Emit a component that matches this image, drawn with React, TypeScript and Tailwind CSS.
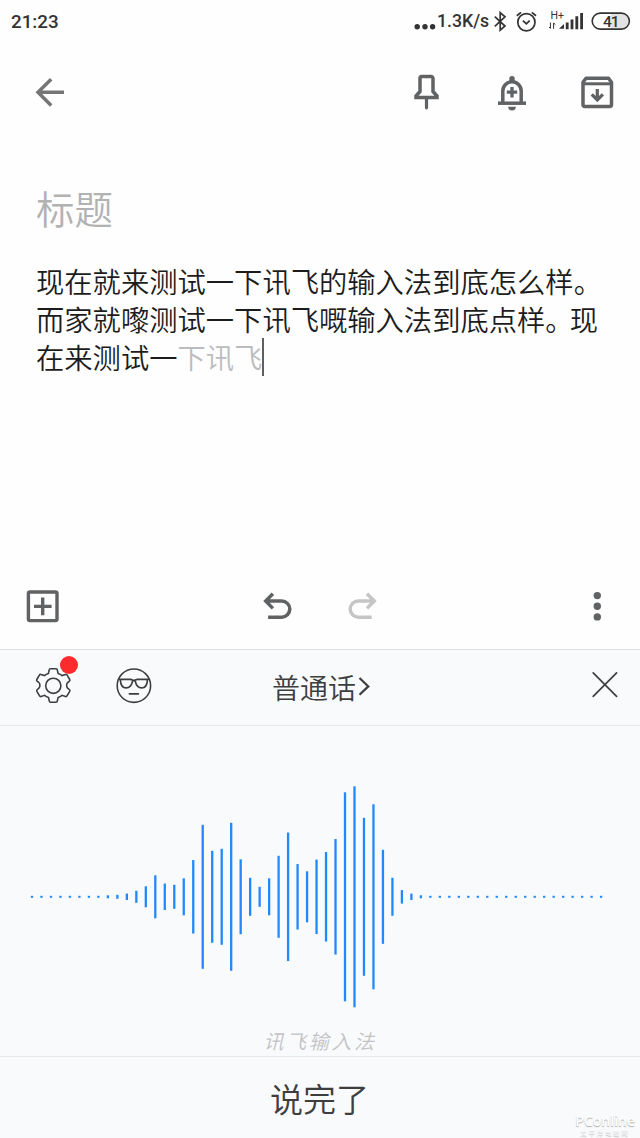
import type { ReactNode } from "react";

const bars = [
  2, 2, 2, 2, 2, 2, 2, 2, 3, 4, 6.5, 12, 21, 43, 26.5, 24, 37, 73.5, 144, 92, 96, 148, 75, 38, 20, 37, 82, 128.5, 65.5,
  51, 74.5, 89.5, 115.5, 209, 221, 158, 185, 94, 38, 13.5, 6.5, 3, 2, 2, 2, 2, 2, 2, 2, 2, 2, 2, 2, 2, 2, 2, 2, 2, 2,
  2, 2,
];

const BAR_PITCH = 9.485;

function IconButton({ label, viewBox, children }: { label: string; viewBox: string; children: ReactNode }) {
  return (
    <button aria-label={label} className="block h-[42px] w-[42px] shrink-0">
      <svg viewBox={viewBox} className="h-full w-full" fill="none" stroke="currentColor">
        {children}
      </svg>
    </button>
  );
}

function StatusBar() {
  return (
    <div className="flex h-11 items-center justify-between pl-[11px] pr-[9px] font-[Roboto,sans-serif] font-medium text-[#333]">
      <span className="text-[18.8px] leading-none">21:23</span>
      <div className="flex items-center">
        <svg className="h-6 w-[23px]" viewBox="414 10 23 24" fill="currentColor">
          <circle cx="417.2" cy="26.8" r="2.7" />
          <circle cx="425" cy="26.8" r="2.7" />
          <circle cx="432.6" cy="26.8" r="2.7" />
        </svg>
        <span className="w-[54px] whitespace-nowrap text-[17.7px] leading-none">1.3K/s</span>
        <svg className="h-6 w-[140px]" viewBox="491 10 140 24" fill="none" stroke="currentColor">
          {/* bluetooth */}
          <path d="M494.8 16.6 505 26 500.2 30.2V12.6L505 16.8 494.8 26.4" strokeWidth="1.7" />
          {/* alarm */}
          <circle cx="526.4" cy="22.3" r="8.6" strokeWidth="1.7" />
          <path d="M522.9 20.6 526.3 23.8 529.7 20.6M516.8 15.7 521 12.4M531.8 12.4 536 15.7" strokeWidth="1.8" />
          {/* signal */}
          <path d="M550.4 22.5V28.4L549 27M553.6 28.8V23L555.4 24.6" strokeWidth="1" />
          <path d="M559 28.8h5V24z" fill="currentColor" stroke="none" />
          <path d="M567.2 29.2V22.5M572 29.2V19.5M576.8 29.2V16.2M581.6 29.2V13" strokeWidth="2.8" />
          <text x="550.6" y="19" fontSize="10.5" fontWeight="400" fill="currentColor" stroke="none">H+</text>
          {/* battery */}
          <path d="M611 14h11a7 7 0 0 1 0 14h-11z" fill="#e2e2e2" stroke="none" />
          <rect x="592.2" y="13.1" width="37.2" height="16" rx="8" strokeWidth="1.6" />
          <text x="603" y="26.7" fontSize="15.5" letterSpacing="-1" fill="currentColor" stroke="none">41</text>
        </svg>
      </div>
    </div>
  );
}

function NoteHeader() {
  return (
    <div className="flex h-24 items-center justify-between pl-[29px] pr-[22px]">
      <div className="text-[#757575]">
        <IconButton label="返回" viewBox="29 71 42 42">
          <path d="M64 92.3H38.5M51.2 79.3 38 92.3 51.2 105.4" strokeWidth="3.5" />
        </IconButton>
      </div>
      <div className="flex gap-[43.5px] text-[#616264]">
        <IconButton label="固定" viewBox="405 71 42 42">
          <path d="M420 78.4a1.8 1.8 0 0 1 1.8-1.8h9.4a1.8 1.8 0 0 1 1.8 1.8V91.5L437 96v1.4H416V96l4-4.5z" strokeWidth="3.5" />
          <path d="M426.5 97.5V107.8" strokeWidth="3.2" strokeLinecap="round" />
        </IconButton>
        <IconButton label="提醒" viewBox="491 71 42 42">
          <path d="M502.8 103V91a9.2 9.2 0 0 1 18.4 0v12" strokeWidth="3.5" />
          <path d="M498 103.2h28" strokeWidth="3.5" />
          <path d="M506.8 92.2h10.4M512 87v10.4" strokeWidth="3.3" />
          <path d="M509.3 81v-2.4a2.7 2.7 0 0 1 5.4 0V81zM508.2 106.7h7.6a3.8 3.8 0 0 1-7.6 0z" fill="currentColor" stroke="none" />
        </IconButton>
        <IconButton label="归档" viewBox="576 71 42 42">
          <path
            d="M583 82.2 586 78.2h22.5l3 4v22.4a2 2 0 0 1-2 2H585a2 2 0 0 1-2-2z"
            strokeWidth="3.5"
            strokeLinejoin="round"
          />
          <path d="M583 83.8h28.5" strokeWidth="3" />
          <path d="M597.3 89v10M591.7 94.4l5.6 5.6 5.6-5.6" strokeWidth="3.2" />
        </IconButton>
      </div>
    </div>
  );
}

function NoteBody() {
  return (
    <div className="h-[424px] pl-[36px] pt-[39px]">
      <div className="text-[38.4px] font-[350] leading-[56px] text-[#b2b2b2]">标题</div>
      <div className="mt-[27px] whitespace-nowrap text-[28.3px] font-[350] leading-[38px] text-[#1c1c1c]">
        <p>现在就来测试一下讯飞的输入法到底怎么样。</p>
        <p>
          而家就嚟测试一下讯飞嘅输入法到底点样<span className="-mr-[4px]">。</span>现
        </p>
        <p className="flex items-center">
          在来测试一<span className="text-[#bcbcbe]">下讯飞</span>
          <span className="h-[38px] w-[2px] bg-[#5f5f5f]" />
        </p>
      </div>
    </div>
  );
}

function NoteToolbar() {
  return (
    <div className="flex h-[85px] items-center justify-between pb-px pl-[21px] pr-[22px] text-[#616264]">
      <IconButton label="添加" viewBox="21 585 42 42">
        <rect x="28.4" y="592" width="28.6" height="28.6" rx="1.6" strokeWidth="3.4" />
        <path d="M34 606.4h17.6M42.7 597.5v17.8" strokeWidth="3.4" />
      </IconButton>
      <div className="flex gap-[43px]">
        <IconButton label="撤销" viewBox="256.5 585 42 42">
          <path d="M268.6 617.2h13.6a8.1 8.1 0 0 0 0-16.2H266M273.4 593.8 266.2 601l7.2 7.4" strokeWidth="3.5" />
        </IconButton>
        <div className="text-[#c5c5c5]">
          <IconButton label="重做" viewBox="341 585 42 42">
            <path d="M371.7 617.2h-13.4a8.1 8.1 0 0 1 0-16.2H374M367 593.8l7.2 7.2-7.2 7.4" strokeWidth="3.5" />
          </IconButton>
        </div>
      </div>
      <IconButton label="更多" viewBox="576 585 42 42">
        <g fill="currentColor" stroke="none">
          <circle cx="597.3" cy="595.6" r="3.7" />
          <circle cx="597.3" cy="606.2" r="3.7" />
          <circle cx="597.3" cy="616.9" r="3.7" />
        </g>
      </IconButton>
    </div>
  );
}

function VoiceHeader() {
  return (
    <div className="grid h-[76px] grid-cols-3 items-center border-b border-[#e6e8ea] pl-[32px] pr-[14px] text-[#3e3e3e]">
      <div className="flex gap-[39px] pb-[4px]">
        <div className="relative">
          <IconButton label="设置" viewBox="32 665 42 42">
            <path
              d="M50.5 668.7h5.6q1 0 1.2 1.1l.8 3.6q2.2.7 4 2.2l3.4-1.2q1-.4 1.5.5l2.7 4.6q.5.9-.3 1.6l-1.8 1.5q-1.2 1.2-.9 3.2t1 2.4l1.8 1.5q.7.8.2 1.7l-2.7 4.5q-.5.9-1.5.6l-3.5-1.2q-1.7 1.4-3.9 2.2l-.8 3.7q-.2 1.1-1.2 1.1h-5.6q-1 0-1.2-1.1l-.8-3.7q-2.2-.8-3.9-2.2l-3.5 1.2q-1 .3-1.5-.6l-2.7-4.5q-.5-.9.2-1.7l1.8-1.5q1.2-1.2 1-3.2t-1-2.4l-1.8-1.5q-.8-.7-.3-1.6l2.7-4.6q.5-.9 1.5-.5l3.4 1.2q1.8-1.5 4-2.2l.8-3.6q.2-1.1 1.3-1.1z"
              strokeWidth="1.6"
            />
            <circle cx="53.3" cy="685.8" r="7.6" strokeWidth="1.6" />
          </IconButton>
          <span className="absolute left-[28px] top-[-9px] h-[18px] w-[18px] rounded-full bg-[#fd2b2d]" />
        </div>
        <IconButton label="表情" viewBox="113 665 42 42">
          <circle cx="133.9" cy="685.7" r="16.7" strokeWidth="1.6" />
          <path
            d="M119 679.4h11.6l3.3 1.2 3.3-1.2h11.6M120.4 680c.2 5.4 2.4 7.9 5.8 7.9 3.8 0 5.4-2.6 6.4-6.8M147.4 680c-.2 5.4-2.4 7.9-5.8 7.9-3.8 0-5.4-2.6-6.4-6.8M129.4 693.8h9"
            strokeWidth="1.7"
            strokeLinecap="round"
          />
        </IconButton>
      </div>
      <button className="flex items-center justify-center pb-px pr-[15px] text-[28px] font-[350] leading-none">
        普通话
        <svg className="h-[20px] w-[15px]" viewBox="358 677 15 20" fill="none" stroke="currentColor" strokeWidth="2.2">
          <path d="M361.5 678 370.3 686.4 361.5 694.8" />
        </svg>
      </button>
      <div className="flex justify-end pb-[4px]">
        <IconButton label="关闭" viewBox="584 665 42 42">
          <path d="M593.2 672.8 616.6 696.4M616.6 672.8 593.2 696.4" strokeWidth="1.7" strokeLinecap="round" />
        </IconButton>
      </div>
    </div>
  );
}

function Waveform() {
  return (
    <svg className="block h-[300px] w-[640px]" viewBox="0 0 640 300" fill="none" stroke="#2188ff" strokeWidth="2.3">
      {bars.map((h, i) => {
        const x = 32 + i * BAR_PITCH;
        return <line key={i} x1={x} x2={x} y1={170.8 - h / 2} y2={170.8 + h / 2} />;
      })}
    </svg>
  );
}

function VoicePanel() {
  return (
    <div className="h-[489px] border-t border-[#dcdee0] bg-[#f9fafc]">
      <VoiceHeader />
      <div className="h-[331px] border-b border-[#e6e8ea]">
        <Waveform />
        <div className="text-center text-[20px] font-[350] italic leading-[30px] tracking-[2.6px] text-[#c2c3c5]">
          讯飞输入法
        </div>
      </div>
      <div className="relative h-[81px]">
        <button className="block h-full w-full pr-px pt-[3px] text-[33px] font-[350] text-[#3e3e3e]">说完了</button>
        <div className="absolute right-[5px] top-[56px] flex flex-col items-center font-['Open_Sans',sans-serif] text-white [text-shadow:0_1px_1px_#aaa]">
          <div className="text-[14px] font-semibold leading-[15px]">PConline</div>
          <div className="mt-[2px] font-['Noto_Sans_CJK_SC',sans-serif] text-[6px] leading-[6px] tracking-[2.2px]">太平洋电脑网</div>
        </div>
      </div>
    </div>
  );
}

export default function App() {
  return (
    <div className="h-[1138px] w-[640px] overflow-hidden bg-[#fefefe] font-['Noto_Sans_CJK_SC',sans-serif]">
      <StatusBar />
      <NoteHeader />
      <NoteBody />
      <NoteToolbar />
      <VoicePanel />
    </div>
  );
}
